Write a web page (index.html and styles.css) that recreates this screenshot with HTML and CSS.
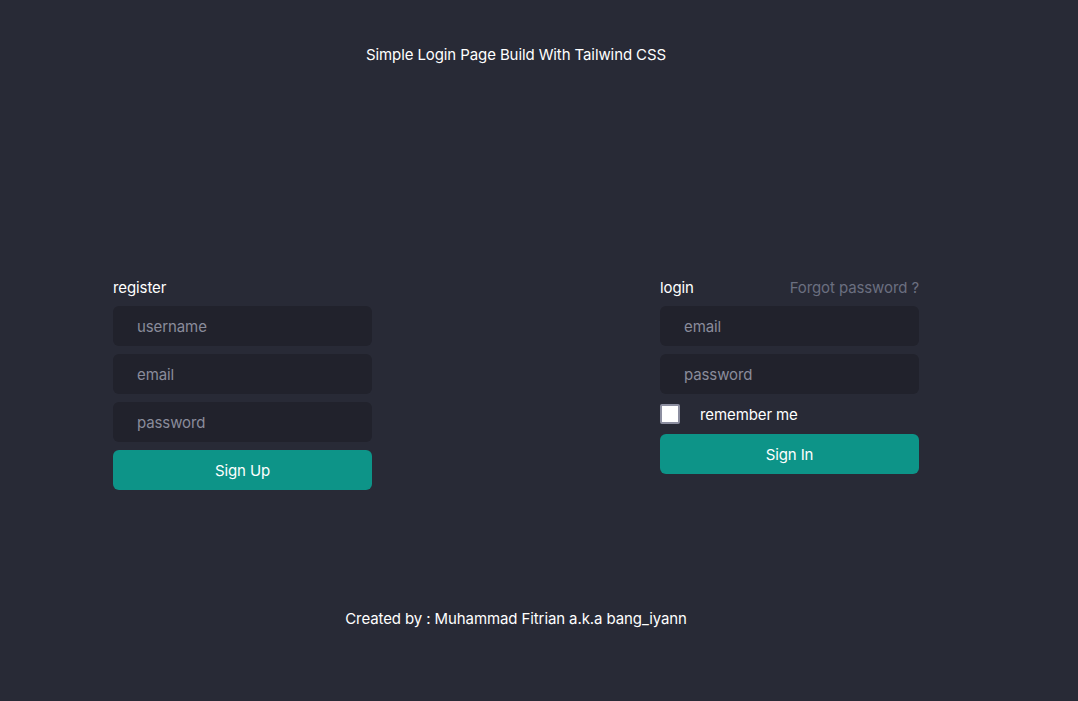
FILE: index.html
```html
<!DOCTYPE html>
<html lang="en">
<head>
<meta charset="utf-8">
<title>Simple Login Page</title>
<link rel="stylesheet" href="styles.css">
</head>
<body>
<div class="page">
  <header class="title">Simple Login Page Build With Tailwind CSS</header>
  <main class="forms">
    <form class="card">
      <div class="card-head"><span class="label">register</span></div>
      <input class="field" type="text" placeholder="username">
      <input class="field" type="email" placeholder="email">
      <input class="field" type="password" placeholder="password">
      <button class="btn" type="button">Sign Up</button>
    </form>
    <form class="card">
      <div class="card-head"><span class="label">login</span><a class="forgot" href="#">Forgot password ?</a></div>
      <input class="field" type="email" placeholder="email">
      <input class="field" type="password" placeholder="password">
      <label class="remember"><span class="box"></span><span>remember me</span></label>
      <button class="btn" type="button">Sign In</button>
    </form>
  </main>
  <footer class="credit">Created by : Muhammad Fitrian a.k.a bang_iyann</footer>
</div>
</body>
</html>
```
FILE: styles.css
```css
* { box-sizing: border-box; }
html, body { margin: 0; padding: 0; }
body {
  background: #282a36;
  color: #ffffff;
  font-family: Inter, "Noto Sans", sans-serif;
  font-size: 15px;
  letter-spacing: -0.1px;
  width: 1078px;
  height: 701px;
  overflow: hidden;
}
.page {
  width: 1032px;
  display: flex;
  flex-direction: column;
  align-items: center;
}
.title {
  margin-top: 45px;
  line-height: 20px;
  font-size: 15px;
}
.forms {
  margin-top: 213px;
  display: flex;
  gap: 288px;
  align-items: flex-start;
}
.card {
  width: 259px;
  display: flex;
  flex-direction: column;
  gap: 8px;
  margin: 0;
}
.card-head {
  display: flex;
  justify-content: space-between;
  align-items: center;
  height: 20px;
  line-height: 20px;
}
.label { font-size: 15px; color: #ffffff; }
.forgot { color: #6b6f80; text-decoration: none; font-size: 15px; }
.field {
  display: block;
  width: 100%;
  height: 40px;
  border: none;
  outline: none;
  border-radius: 6px;
  background: #21222c;
  padding: 0 24px;
  color: #ffffff;
  font-family: inherit;
  font-size: 15px;
  letter-spacing: -0.1px;
}
.field::placeholder { color: #8a8c9b; }
.remember {
  display: flex;
  align-items: center;
  gap: 20px;
  height: 24px;
  font-size: 15px;
}
.box {
  width: 20px;
  height: 20px;
  background: #ffffff;
  border: 2px solid #8c8ea0;
  border-radius: 2px;
}
.btn {
  height: 40px;
  width: 100%;
  border: none;
  border-radius: 6px;
  background: #0d9488;
  color: #ffffff;
  font-family: inherit;
  font-size: 15px;
  letter-spacing: -0.1px;
}
.credit {
  margin-top: 119px;
  line-height: 20px;
  font-size: 15px;
}
```
